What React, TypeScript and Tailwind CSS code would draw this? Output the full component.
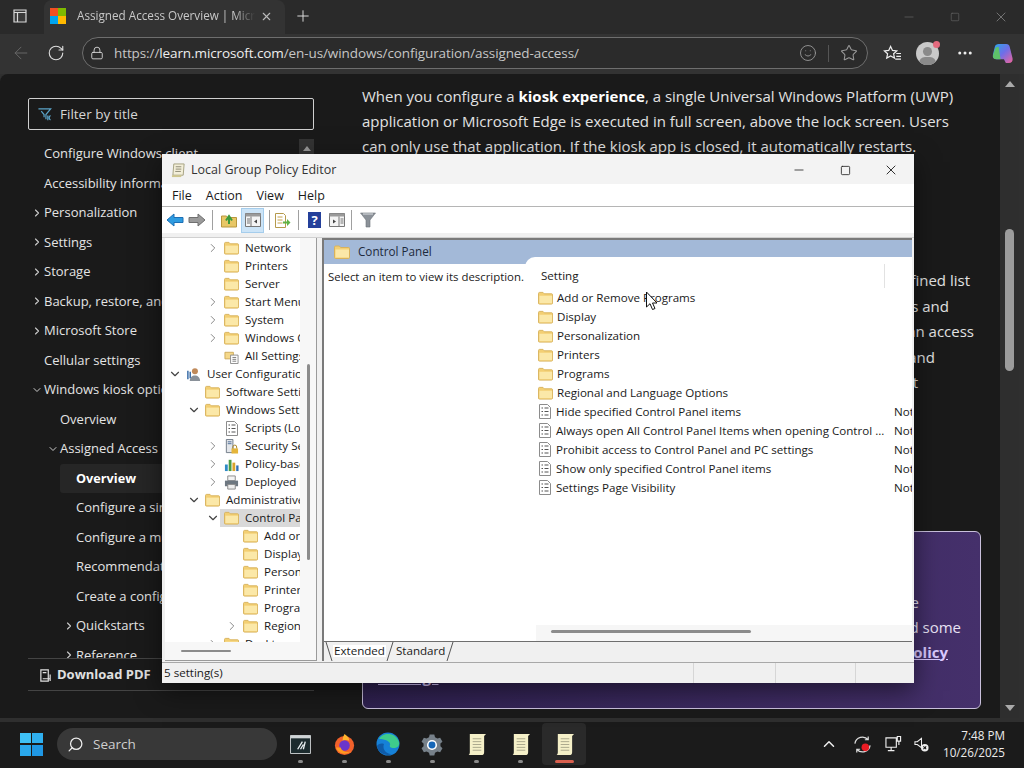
import { ChevronRight, ChevronDown, Search, Star, RotateCw, ArrowLeft, Plus, X, Minus, Square, Lock, Smile, ChevronUp, MoreHorizontal } from 'lucide-react';

const sidebarItems = [
  { label: 'Configure Windows client', x: 44 },
  { label: 'Accessibility information', x: 44 },
  { label: 'Personalization', x: 44, chevron: 'right' },
  { label: 'Settings', x: 44, chevron: 'right' },
  { label: 'Storage', x: 44, chevron: 'right' },
  { label: 'Backup, restore, and recovery', x: 44, chevron: 'right' },
  { label: 'Microsoft Store', x: 44, chevron: 'right' },
  { label: 'Cellular settings', x: 44 },
  { label: 'Windows kiosk options', x: 44, chevron: 'down' },
  { label: 'Overview', x: 60 },
  { label: 'Assigned Access', x: 60, chevron: 'down' },
  { label: 'Overview', x: 76, active: true },
  { label: 'Configure a single-app kiosk', x: 76 },
  { label: 'Configure a multi-app kiosk', x: 76 },
  { label: 'Recommendations', x: 76 },
  { label: 'Create a configuration', x: 76 },
  { label: 'Quickstarts', x: 76, chevron: 'right' },
  { label: 'Reference', x: 76, chevron: 'right' },
];

type TreeRow = { label: string; level: number; chevron?: 'right' | 'down'; icon?: 'folder' | 'doc' | 'user' | 'lock' | 'chart' | 'printer' | 'all'; selected?: boolean };

const treeRows: TreeRow[] = [
  { label: 'Network', level: 2, chevron: 'right' },
  { label: 'Printers', level: 2 },
  { label: 'Server', level: 2 },
  { label: 'Start Menu', level: 2, chevron: 'right' },
  { label: 'System', level: 2, chevron: 'right' },
  { label: 'Windows Components', level: 2, chevron: 'right' },
  { label: 'All Settings', level: 2, icon: 'all' },
  { label: 'User Configuration', level: 0, chevron: 'down', icon: 'user' },
  { label: 'Software Settings', level: 1 },
  { label: 'Windows Settings', level: 1, chevron: 'down' },
  { label: 'Scripts (Logon/Logoff)', level: 2, icon: 'doc' },
  { label: 'Security Settings', level: 2, chevron: 'right', icon: 'lock' },
  { label: 'Policy-based QoS', level: 2, chevron: 'right', icon: 'chart' },
  { label: 'Deployed Printers', level: 2, chevron: 'right', icon: 'printer' },
  { label: 'Administrative Templates', level: 1, chevron: 'down' },
  { label: 'Control Panel', level: 2, chevron: 'down', selected: true },
  { label: 'Add or Remove Programs', level: 3 },
  { label: 'Display', level: 3 },
  { label: 'Personalization', level: 3 },
  { label: 'Printers', level: 3 },
  { label: 'Programs', level: 3 },
  { label: 'Regional and Language Options', level: 3, chevron: 'right' },
  { label: 'Desktop', level: 2, chevron: 'right' },
];

const folderSettings = ['Add or Remove Programs', 'Display', 'Personalization', 'Printers', 'Programs', 'Regional and Language Options'];
const policySettings = [
  'Hide specified Control Panel items',
  'Always open All Control Panel Items when opening Control ...',
  'Prohibit access to Control Panel and PC settings',
  'Show only specified Control Panel items',
  'Settings Page Visibility',
];

function FolderIcon({ className = 'w-[15px] h-[14px]' }: { className?: string }) {
  return (
    <svg viewBox="0 0 16 14" className={className}>
      <path d="M.5 12.5V2.2c0-.7.5-1.2 1.2-1.2h3.6l1.4 1.5h8c.4 0 .8.4.8.8v9.2c0 .6-.4 1-1 1H1.500c-.6 0-1-.4-1-1z" fill="#f3cf73" stroke="#d8b25c" />
      <path d="M1.500 4.500h13.500v8H1.500z" fill="#fbe8a8" />
    </svg>
  );
}

function PolicyIcon() {
  return (
    <svg viewBox="0 0 14 15" className="w-[14px] h-[15px]">
      <path d="M1.500.5h8l3 3v11h-11z" fill="#fff" stroke="#8c8c8c" />
      <path d="M3.500 4h1.500M3.500 7.500h1.500M3.500 11h1.500M6.500 4h4M6.500 7.500h4M6.500 11h4" stroke="#555" strokeWidth="1.100" />
    </svg>
  );
}

function TreeIcon({ icon }: { icon?: TreeRow['icon'] }) {
  if (icon === 'user') {
    return (
      <svg viewBox="0 0 16 16" className="w-[15px] h-[15px]">
        <circle cx="9.500" cy="4.500" r="3.200" fill="#c08a5a" />
        <path d="M4 15c0-4 2.500-6 5.500-6s5.500 2 5.500 6z" fill="#8a9199" />
        <path d="M2 4v9M4.500 5v7" stroke="#3b6ea8" strokeWidth="1.600" />
      </svg>
    );
  }
  if (icon === 'doc') {
    return <PolicyIcon />;
  }
  if (icon === 'all') {
    return (
      <svg viewBox="0 0 16 16" className="w-[15px] h-[15px]">
        <path d="M1 3.500h9v7H1z" fill="#f5d88a" stroke="#cdaa5a" />
        <path d="M7 6.500h8v9H7z" fill="#fff" stroke="#8c8c8c" />
        <path d="M9 9h4M9 11h4M9 13h4" stroke="#777" />
      </svg>
    );
  }
  if (icon === 'lock') {
    return (
      <svg viewBox="0 0 16 16" className="w-[15px] h-[15px]">
        <path d="M2.500.5h7v14h-7z" fill="#e3e6ea" stroke="#6f7a86" />
        <path d="M4 3h4M4 5h4" stroke="#4b6c96" />
        <path d="M8 10h7v5.500H8z" fill="#e5b53a" />
        <path d="M9.500 10V8.500a2 2 0 014 0V10" fill="none" stroke="#a8821f" />
      </svg>
    );
  }
  if (icon === 'chart') {
    return (
      <svg viewBox="0 0 16 16" className="w-[16px] h-[15px]">
        <path d="M1 8h3v7H1z" fill="#2f8ac6" />
        <path d="M5 3h3v12H5z" fill="#4a9d45" />
        <path d="M9 6h3v9H9z" fill="#d9a32b" />
        <path d="M13 9h2.500v6H13z" fill="#2f6fb5" />
      </svg>
    );
  }
  if (icon === 'printer') {
    return (
      <svg viewBox="0 0 16 16" className="w-[16px] h-[15px]">
        <path d="M4 1h8v5H4z" fill="#f4f4f4" stroke="#888" />
        <path d="M1 6h14v6H1z" fill="#6d7780" />
        <path d="M4 10h8v5H4z" fill="#eee" stroke="#888" />
      </svg>
    );
  }
  return <FolderIcon />;
}

function ToolbarIcons() {
  return (
    <div className="h-[26px] flex items-center bg-white pl-[4px]">
      <svg viewBox="0 0 18 14" className="w-[18px] h-[14px]">
        <path d="M1 7l7-6v3.500h9v5H8V13z" fill="#2e9be0" stroke="#1c6fb5" />
      </svg>
      <svg viewBox="0 0 18 14" className="w-[18px] h-[14px] ml-[4px]">
        <path d="M17 7l-7-6v3.500H1v5h9V13z" fill="#9a9a9a" stroke="#6f6f6f" />
      </svg>
      <div className="w-px h-[20px] bg-[#a0a0a0] ml-[6px]" />
      <svg viewBox="0 0 16 15" className="w-[16px] h-[15px] ml-[8px]">
        <path d="M.5 14V3h5l1 1.500h9V14z" fill="#e8c766" stroke="#b8973e" />
        <path d="M8 11V5M5 7.500L8 3l3 4.500" fill="none" stroke="#3c9a3c" strokeWidth="2" />
      </svg>
      <div className="w-[23px] h-[25px] ml-[4px] bg-[#cce4f7] border border-[#a5cdec] flex items-center justify-center">
        <svg viewBox="0 0 16 14" className="w-[16px] h-[14px]">
          <path d="M.5.5h15v13H.5z" fill="#f4f4f4" stroke="#777" />
          <path d="M.5.5h15v3H.5z" fill="#9a9a9a" />
          <path d="M6 3.500v10M2 6h3M2 8h3M2 10h3" stroke="#777" />
          <path d="M12 6.500v4l-3-2z" fill="#444" />
        </svg>
      </div>
      <div className="w-px h-[20px] bg-[#a0a0a0] ml-[5px]" />
      <svg viewBox="0 0 17 15" className="w-[17px] h-[15px] ml-[4px]">
        <path d="M1.500.5h8l2 2v12h-10z" fill="#fff" stroke="#b59a4c" />
        <path d="M3.500 4h5M3.500 7h5M3.500 10h5" stroke="#c4a24c" />
        <path d="M9 8.500h4V6l3.500 3.500L13 13v-2.500H9z" fill="#5fb345" />
      </svg>
      <div className="w-px h-[20px] bg-[#a0a0a0] ml-[7px]" />
      <div className="w-[13px] h-[16px] ml-[9px] bg-[#24409a] text-white text-[13px] font-bold flex items-center justify-center leading-none">?</div>
      <svg viewBox="0 0 16 14" className="w-[16px] h-[14px] ml-[8px]">
        <path d="M.5.5h15v13H.5z" fill="#f4f4f4" stroke="#777" />
        <path d="M.5.5h15v3H.5z" fill="#9a9a9a" />
        <path d="M10 3.500v10M11.500 6h3M11.500 8h3M11.500 10h3" stroke="#777" />
        <path d="M4 6.500v4l3-2z" fill="#444" />
      </svg>
      <div className="w-px h-[20px] bg-[#a0a0a0] ml-[6px]" />
      <svg viewBox="0 0 16 16" className="w-[16px] h-[16px] ml-[8px]">
        <path d="M.5 1h15L10 8v7H6V8z" fill="#8b9198" stroke="#6c7278" strokeWidth=".6" />
        <path d="M3 2h10" stroke="#dfe2e5" />
      </svg>
    </div>
  );
}

function TabSlash({ flip = false }: { flip?: boolean }) {
  return (
    <svg viewBox="0 0 8 19" className="w-[8px] h-[19px] shrink-0">
      <path d={flip ? 'M1 19L7 0' : 'M1 0l6 19'} stroke="#555" fill="none" />
    </svg>
  );
}

function PolicyEditorWindow() {
  return (
    <div className="absolute left-[162px] top-[154px] w-[752px] h-[529px] bg-[#f0f0f0] text-[#1a1a1a] flex flex-col text-[11.600px] leading-none font-['Open_Sans',sans-serif] shadow-[0_8px_24px_rgba(0,0,0,0.5)]">
      <div className="h-[30px] shrink-0 bg-[#f3f3f3] flex items-center pl-[9px] pt-[2px]">
        <svg viewBox="0 0 16 16" className="w-[15px] h-[15px]">
          <path d="M3 1h11l-1 12H2z" fill="#f3efd9" stroke="#a3a07f" />
          <path d="M5 4h6M5 6.500h6M4.500 9h6" stroke="#8a8872" />
          <path d="M1 13h10v2H1z" fill="#cfc78f" />
        </svg>
        <span className="ml-[5px] text-[12.500px] text-[#333]">Local Group Policy Editor</span>
        <div className="ml-auto flex items-center text-[#222]">
          <div className="w-[46px] flex justify-center"><Minus size={14} strokeWidth={1.400} /></div>
          <div className="w-[46px] flex justify-center"><Square size={11} strokeWidth={1.800} /></div>
          <div className="w-[46px] flex justify-center"><X size={16} strokeWidth={1.400} /></div>
        </div>
      </div>
      <div className="h-[23px] shrink-0 bg-white border-b border-[#b5b5b5] flex items-center gap-[14px] pl-[10px] pt-[2px] text-[12.500px]">
        <span>File</span>
        <span>Action</span>
        <span>View</span>
        <span>Help</span>
      </div>
      <ToolbarIcons />
      <div className="flex-1 min-h-0 flex mt-[4px] pl-[3px] pr-[2px] border-t border-[#d0d0d0]">
        <div className="w-[152px] shrink-0 bg-white border-r border-b border-[#9a9a9a] flex flex-col overflow-hidden">
          <div className="flex-1 min-h-0 flex">
            <div className="w-[135px] shrink-0 overflow-hidden pt-[1px]">
              {treeRows.map((row, i) => (
                <div key={i} className="h-[18px] flex items-center whitespace-nowrap" style={{ paddingLeft: row.level * 19 + 3 }}>
                  <div className="w-[14px] shrink-0 flex justify-center text-[#444]">
                    {row.chevron === 'right' && <ChevronRight size={14} strokeWidth={1.500} className="text-[#777]" />}
                    {row.chevron === 'down' && <ChevronDown size={14} strokeWidth={2} />}
                  </div>
                  <div className={`flex items-center h-[18px] pl-[4px] pr-[40px] ${row.selected ? 'bg-[#d9d9d9]' : ''}`}>
                    <div className="w-[15px] shrink-0 flex justify-center"><TreeIcon icon={row.icon} /></div>
                    <span className="ml-[6px]">{row.label}</span>
                  </div>
                </div>
              ))}
            </div>
            <div className="flex-1 bg-[#f7f7f7] flex justify-center pt-[126px]">
              <div className="w-[3px] h-[196px] bg-[#8c8c8c] rounded-full" />
            </div>
          </div>
          <div className="h-[18px] shrink-0 bg-[#f7f7f7] flex items-center pl-[16px]">
            <div className="w-[50px] h-[2.500px] bg-[#8c8c8c] rounded-full" />
          </div>
        </div>
        <div className="flex-1 min-w-0 ml-[5px] border-l-2 border-t-2 border-[#7a7a7a] flex flex-col overflow-hidden">
          <div className="h-[24px] shrink-0 bg-[#a3b9d8] flex items-center pl-[10px]">
            <FolderIcon className="w-[16px] h-[14px]" />
            <span className="ml-[8px] text-[11.700px] text-[#1d2a3c]">Control Panel</span>
          </div>
          <div className="flex-1 min-h-0 flex bg-white">
            <div className="w-[201px] shrink-0 pl-[4px] pt-[7px] whitespace-nowrap text-[11.400px]">Select an item to view its description.</div>
            <div className="flex-1 min-w-0 -mt-[7px] relative bg-white rounded-tl-[10px] flex flex-col overflow-hidden">
              <div className="h-[31px] shrink-0 flex items-center pl-[16px] pt-[6px]">
                <span className="flex-1">Setting</span>
                <div className="w-px h-[24px] bg-[#e2e2e2] mr-[27px]" />
              </div>
              <div className="flex-1 min-h-0">
                {folderSettings.map(label => (
                  <div key={label} className="h-[19px] flex items-center whitespace-nowrap pl-[13px]">
                    <div className="w-[15px] flex justify-center"><FolderIcon /></div>
                    <span className="ml-[4px]">{label}</span>
                  </div>
                ))}
                {policySettings.map(label => (
                  <div key={label} className="h-[19px] flex items-center whitespace-nowrap pl-[13px]">
                    <div className="w-[15px] flex justify-center"><PolicyIcon /></div>
                    <span className="ml-[4px] w-[338px] shrink-0">{label}</span>
                    <span className="overflow-hidden">Not configured</span>
                  </div>
                ))}
              </div>
              <div className="h-[16px] shrink-0 ml-[11px] bg-[#f6f6f6] flex items-start pt-[5px] pl-[15px]">
                <div className="w-[200px] h-[2.500px] bg-[#8c8c8c] rounded-full" />
              </div>
            </div>
          </div>
          <div className="h-[20px] shrink-0 bg-[#f0f0f0] border-t border-[#6e6e6e] flex items-center pl-[1px] pb-[1px]">
            <TabSlash />
            <span className="px-[1px] bg-white">Extended</span>
            <div className="w-[7px]"><TabSlash flip /></div>
            <span className="px-[1px] ml-[2px]">Standard</span>
            <TabSlash flip />
          </div>
        </div>
      </div>
      <div className="h-[21px] shrink-0 bg-[#f0f0f0] border-t border-[#a8a8a8] flex items-center pl-[2px] mt-[1px]">
        <span className="w-[529px] shrink-0">5 setting(s)</span>
        <div className="w-[82px] h-full border-l border-[#d6d6d6]" />
        <div className="w-[80px] h-full border-l border-[#d6d6d6]" />
        <div className="flex-1 h-full border-l border-[#d6d6d6]" />
      </div>
    </div>
  );
}

function Sidebar() {
  return (
    <aside className="w-[336px] shrink-0 flex flex-col pl-[23px] pr-[27px] pt-[24px] text-[#e4e4e4]">
      <div className="h-[32px] shrink-0 border border-[#d0d0d0] rounded-[2px] flex items-center pl-[8px] text-[13.500px] text-[#d6d6d6]">
        <svg viewBox="0 0 16 16" className="w-[16px] h-[15px] text-[#5ba4c8]" fill="none" stroke="currentColor" strokeWidth="1.300">
          <path d="M1 2h13L9 8v5M7 11V8L4 4.500" />
          <path d="M11 9v5M14 9.500c-2-.5-2 4.500 0 4" />
        </svg>
        <span className="ml-[7px]">Filter by title</span>
      </div>
      <div className="relative flex-1 min-h-0 mt-[9px] overflow-hidden text-[13px]">
        {sidebarItems.map((item, i) => (
          <div
            key={i}
            className="h-[29.500px] flex items-center whitespace-nowrap"
            style={{ paddingLeft: item.x - 42 }}
          >
            <div className="w-[14px] shrink-0 flex justify-center text-[#ccc]">
              {item.chevron === 'right' && <ChevronRight size={12} strokeWidth={2.200} />}
              {item.chevron === 'down' && <ChevronDown size={12} strokeWidth={2} />}
            </div>
            {item.active ? (
              <span className="flex-1 -ml-[16px] pl-[16px] h-full flex items-center bg-[#262626] rounded-l-[3px] font-bold text-white text-[12.700px]">{item.label}</span>
            ) : (
              <span>{item.label}</span>
            )}
          </div>
        ))}
        <div className="absolute right-0 top-0 w-[15px] h-[22px] bg-[#333] flex justify-center pt-[7px]">
          <div className="w-0 h-0 border-x-[4px] border-x-transparent border-b-[5px] border-b-[#999]" />
        </div>
      </div>
      <div className="h-[33px] shrink-0 mb-[27px] border-y border-[#444] flex items-center pl-[11px] pt-[1px] text-[13px] font-bold text-[#e0e0e0]">
        <svg viewBox="0 0 14 14" className="w-[13px] h-[13px]" fill="none" stroke="currentColor" strokeWidth="1.300">
          <path d="M2 1h8v12H2zM4 4h4M12 6v7M4 10.500h8" />
        </svg>
        <span className="ml-[5px]">Download PDF</span>
      </div>
    </aside>
  );
}

function TaskbarIcon({ active, children }: { active?: boolean; children: React.ReactNode }) {
  return (
    <div className={`w-[44px] h-[42px] flex flex-col items-center justify-center relative ${active ? 'bg-[#2a2a2a] rounded-[4px]' : ''}`}>
      {children}
      <div className={`absolute bottom-[2px] h-[3px] rounded-full ${active ? 'w-[19px] bg-[#d9604f]' : 'w-[5px] bg-[#8a8a8a]'}`} />
    </div>
  );
}

function NotepadIcon() {
  return (
    <svg viewBox="0 0 22 24" className="w-[21px] h-[23px]">
      <path d="M4 1h17l-2 2v17c0 2-1 3-3 3H2c1 0 2-1 2-3z" fill="#f5f0c8" />
      <path d="M7 6h9M7 9h9M7 12h9M7 15h9M7 18h9" stroke="#a9a68a" />
    </svg>
  );
}

function Taskbar() {
  return (
    <footer className="h-[46px] shrink-0 bg-[#1b1b1b] flex items-center pb-[2px] text-[#eee] font-['Open_Sans',sans-serif]">
      <div className="ml-[20px] w-[23px] h-[23px] grid grid-cols-2 gap-[1.500px]">
        <div className="bg-[#3fc1f5]" />
        <div className="bg-[#2fb0f0]" />
        <div className="bg-[#2aa8ec]" />
        <div className="bg-[#1f97e4]" />
      </div>
      <div className="ml-[14px] w-[220px] h-[32px] rounded-full bg-[#383838] flex items-center pl-[10px] text-[13.500px] text-[#cfcfcf]">
        <Search size={17} strokeWidth={1.800} className="text-[#eee] -scale-x-100" />
        <span className="ml-[9px]">Search</span>
      </div>
      <div className="ml-[1px] flex items-center">
        <TaskbarIcon>
          <svg viewBox="0 0 22 20" className="w-[21px] h-[19px]">
            <path d="M.5.500h21v19H.5z" fill="#1c2b2e" stroke="#c9ced0" />
            <path d="M.5.500h21v3H.5z" fill="#cfd4d6" />
            <path d="M8 15l5-8M11 15l3-5M14 15l2-8" stroke="#e8eef0" strokeWidth="1.400" />
          </svg>
        </TaskbarIcon>
        <TaskbarIcon>
          <svg viewBox="0 0 24 24" className="w-[23px] h-[23px]">
            <circle cx="12" cy="13" r="10" fill="#f2612b" />
            <path d="M12 1c3 2 5 4 5 7-2-1-5-1-7 0 0-3 1-5 2-7z" fill="#ffb52e" />
            <circle cx="12" cy="13" r="5.500" fill="#6a35c9" />
            <path d="M3 15c2 6 10 9 16 4-5 2-10 0-11-4z" fill="#ff9a1f" />
          </svg>
        </TaskbarIcon>
        <TaskbarIcon>
          <svg viewBox="0 0 24 24" className="w-[24px] h-[24px]">
            <circle cx="12" cy="12" r="11.500" fill="#1681d8" />
            <path d="M3 7c3-6 16-8 20 3 1 4-2 6-5 6-3 0-5-1-4-3 1-3-4-6-11-6z" fill="#3ecb8c" />
            <path d="M8 12c-2 5 2 10 8 10-6 3-14-1-15-8 1-2 4-3 7-2z" fill="#0f5ba8" />
          </svg>
        </TaskbarIcon>
        <TaskbarIcon>
          <svg viewBox="0 0 24 24" className="w-[22px] h-[23px]">
            <path d="M9.500 1h5l.8 3 2.600 1.500 3-.9 2.500 4.300-2.200 2.100v3l2.200 2.100-2.500 4.300-3-.9L15.300 21l-.8 3h-5l-.8-3-2.600-1.500-3 .9L.600 16.100l2.200-2.100v-3L.600 8.900 3.100 4.600l3 .9L8.700 4z" fill="#77818a" />
            <circle cx="12" cy="12.500" r="5.500" fill="#fff" />
            <circle cx="12" cy="12.500" r="3.800" fill="#1667b8" />
          </svg>
        </TaskbarIcon>
        <TaskbarIcon><NotepadIcon /></TaskbarIcon>
        <TaskbarIcon><NotepadIcon /></TaskbarIcon>
        <TaskbarIcon active><NotepadIcon /></TaskbarIcon>
      </div>
      <div className="ml-auto flex items-center pr-[19px]">
        <ChevronUp size={18} strokeWidth={2} />
        <svg viewBox="0 0 20 20" className="w-[19px] h-[19px] ml-[15px]" fill="none" stroke="#ddd" strokeWidth="1.300">
          <path d="M2 9a8 8 0 0114-4M16 1.500V5h-3.500M18 11a8 8 0 01-14 4M4 18.500V15h3.500" />
          <circle cx="13" cy="13" r="4" fill="#ea1c24" stroke="none" />
        </svg>
        <svg viewBox="0 0 18 18" className="w-[17px] h-[18px] ml-[13px]" fill="none" stroke="#eee" strokeWidth="1.200">
          <path d="M1 2.500h11v10H1zM6.500 12.500v3M3 16h7M13 1h3.500v5H13zM14.700 6v4" />
        </svg>
        <svg viewBox="0 0 16 16" className="w-[15px] h-[15px] ml-[12px]" fill="none" stroke="#eee" strokeWidth="1.100">
          <path d="M1 5h2.500L8 1.500v10L3.500 8H1z" />
          <circle cx="11.500" cy="11.500" r="4" fill="#eee" stroke="none" />
          <path d="M10 10l3 3M13 10l-3 3" stroke="#1b1b1b" />
        </svg>
        <div className="ml-[10px] w-[66px] text-right text-[11.700px] leading-[17px] text-[#ececec] whitespace-nowrap">
          <div>7:48 PM</div>
          <div>10/26/2025</div>
        </div>
      </div>
    </footer>
  );
}

export default function App() {
  return (
    <div className="relative w-[1024px] h-[768px] overflow-hidden bg-[#2f2f2f] flex flex-col font-['Open_Sans',sans-serif]">
      <header className="h-[34px] shrink-0 bg-[#2a2a2a] flex items-end text-[#c8c8c8]">
        <div className="w-[44px] h-[34px] flex items-center justify-center -mt-[2px]">
          <svg viewBox="0 0 14 14" className="w-[14px] h-[14px] -translate-x-[2px] -translate-y-[1px]" fill="none" stroke="#d8d8d8" strokeWidth="1.200">
            <path d="M1 1h12v12H1z" fill="#3a3a3a" />
            <path d="M1 3.500h12M4.500 3.500V13" />
          </svg>
        </div>
        <div className="w-[241px] h-[34px] bg-[#333] rounded-t-[8px] flex items-center pl-[6px] pb-[2px] text-[11.700px]">
          <div className="w-[16px] h-[16px] grid grid-cols-2">
            <div className="bg-[#f25022]" />
            <div className="bg-[#7fba00]" />
            <div className="bg-[#00a4ef]" />
            <div className="bg-[#ffb900]" />
          </div>
          <span className="ml-[11px] w-[178px] overflow-hidden whitespace-nowrap [mask-image:linear-gradient(to_right,black_88%,transparent)]">Assigned Access Overview | Microsoft Learn</span>
          <X size={13} strokeWidth={2} className="ml-[5px] text-[#bbb]" />
        </div>
        <div className="h-[34px] flex items-center ml-[9px] pb-[2px]">
          <Plus size={18} strokeWidth={1.300} className="text-[#ddd]" />
        </div>
        <div className="ml-auto h-[34px] flex items-center text-[#666]">
          <div className="w-[46px] flex justify-center"><Minus size={14} strokeWidth={1.200} /></div>
          <div className="w-[46px] flex justify-center"><Square size={10} strokeWidth={1.500} /></div>
          <div className="w-[46px] flex justify-center"><X size={16} strokeWidth={1.400} className="text-[#777]" /></div>
        </div>
      </header>
      <div className="h-[40px] shrink-0 bg-[#333] flex items-center pb-[2px]">
        <ArrowLeft size={20} strokeWidth={1.200} className="ml-[11px] text-[#666]" />
        <RotateCw size={18} strokeWidth={1.500} className="ml-[16px] text-[#ddd]" />
        <div className="ml-[17px] w-[786px] h-[32px] rounded-full border border-[#6e6e6e] bg-[#2b2b2b] flex items-center pl-[7px] text-[13.500px] tracking-[-0.1px] text-[#c6c6c6]">
          <Lock size={14} strokeWidth={1.500} className="text-[#ddd]" />
          <span className="ml-[10px] whitespace-nowrap">https://<span className="text-[#eee]">learn.microsoft.com</span>/en-us/windows/configuration/assigned-access/</span>
          <div className="ml-auto flex items-center">
            <Smile size={18} strokeWidth={1.200} className="text-[#999]" />
            <div className="w-px h-[17px] bg-[#555] ml-[11px]" />
            <Star size={18} strokeWidth={1.400} className="ml-[11px] mr-[9px] text-[#999]" />
          </div>
        </div>
        <svg viewBox="0 0 20 18" className="w-[19px] h-[17px] ml-[15px]" fill="none" stroke="#eee" strokeWidth="1.300">
          <path d="M8 1.500l2 4.300 4.500.5-3.300 3 .9 4.500L8 11.700l-4.100 2.100.9-4.500-3.300-3L6 5.800zM14 9h5M14 12h5M13 15h6" />
        </svg>
        <div className="ml-[14px] relative w-[23px] h-[23px]">
          <div className="w-[23px] h-[23px] rounded-full bg-[#c9c9c9] relative overflow-hidden">
            <div className="absolute left-[7px] top-[5px] w-[9px] h-[9px] rounded-full bg-[#8a8a8a]" />
            <div className="absolute left-[3px] top-[15px] w-[17px] h-[12px] rounded-full bg-[#8a8a8a]" />
          </div>
          <div className="absolute -right-[1px] -top-[1px] w-[7px] h-[7px] rounded-full bg-[#e36a7e]" />
        </div>
        <MoreHorizontal size={18} strokeWidth={2} className="ml-[17px] text-[#eee]" />
        <svg viewBox="0 0 24 24" className="w-[23px] h-[23px] ml-[17px]">
          <defs>
            <linearGradient id="copilot" x1="0" y1="0" x2="1" y2="1">
              <stop offset="0" stopColor="#27a8e8" />
              <stop offset="0.5" stopColor="#6f6ee8" />
              <stop offset="1" stopColor="#f0649a" />
            </linearGradient>
          </defs>
          <path d="M8 2h8c2 0 3 1 3.500 3l3 12c.5 3-1 5-4 5h-3l-2-4H6c-3 0-4.500-2-4-5l2-8c.5-2 2-3 4-3z" fill="url(#copilot)" />
          <path d="M2 14l2-6c.5-2 2-3 4-3l2 13H6c-3 0-4.500-2-4-4z" fill="#5ec26a" />
        </svg>
      </div>
      <div className="flex-1 min-h-0 flex bg-[#1a1a1a] ml-[5px] rounded-tl-[8px] -translate-x-[5px] pl-[5px] border-b-[4px] border-[#2f2f2f]">
        <Sidebar />
        <main className="flex-1 min-w-0 flex flex-col pt-[10px] pl-[21px] text-[15px] leading-[25px] text-[#e2e2e2] whitespace-nowrap">
          <p>When you configure a <b className="text-white">kiosk experience</b>, a single Universal Windows Platform (UWP)</p>
          <p>application or Microsoft Edge is executed in full screen, above the lock screen. Users</p>
          <p>can only use that application. If the kiosk app is closed, it automatically restarts.</p>
          <div className="mt-[109px] w-[612px] text-right leading-[25.500px]">
            <p className="pr-[4px]">a predefined list</p>
            <p className="pr-[25px]">apps and</p>
            <p>can access</p>
            <p className="pr-[39px]">and</p>
            <p className="pr-[56px]">it</p>
          </div>
          <div className="mt-[135px] w-[619px] h-[178px] border border-[#c9c0dc] rounded-[6px] bg-gradient-to-r from-[#2f2150] to-[#45306b] pt-[58px] text-right text-[#e8e2f4] flex flex-col">
            <p className="pr-[61px]">the</p>
            <p className="pr-[19px]">and some</p>
            <p className="pr-[32px]"><b className="underline text-[#d9c8ff]">policy</b></p>
            <p className="text-left pl-[15px] font-bold underline text-[#d9c8ff]">Settings</p>
          </div>
        </main>
        <div className="w-[19px] shrink-0 bg-[#2e2e2e] flex flex-col items-center py-[7px] text-[#aaa]">
          <div className="w-0 h-0 border-x-[5px] border-x-transparent border-b-[6px] border-b-[#aaa]" />
          <div className="w-[9px] h-[142px] mt-[142px] bg-[#9c9c9c] rounded-full" />
          <div className="mt-auto w-0 h-0 border-x-[5px] border-x-transparent border-t-[6px] border-t-[#aaa]" />
        </div>
      </div>
      <Taskbar />
      <PolicyEditorWindow />
      <svg viewBox="0 0 12 20" className="absolute left-[645px] top-[291px] w-[13px] h-[20px]">
        <path d="M1 1v15l3.500-3.300L7 18.500l2.500-1-2.500-5.500h4.500z" fill="#fff" stroke="#111" strokeWidth="1" />
      </svg>
    </div>
  );
}
